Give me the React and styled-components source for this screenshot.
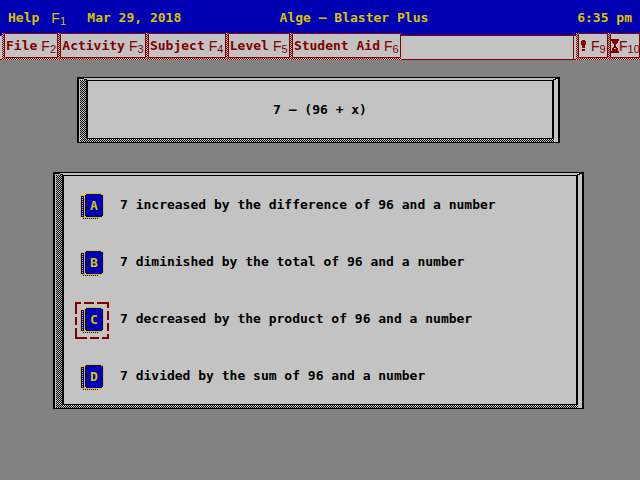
import React, { useState } from 'react';
import styled, { createGlobalStyle } from 'styled-components';

const colors = {
    blue: '#0000b2',
    yellow: '#dbc300',
    maroon: '#820000',
    face: '#c3c3c3',
    desk: '#828282',
    black: '#000000',
};

const checker = (color) =>
    `repeating-conic-gradient(${color} 0 25%, ${colors.face} 0 50%) 0 0 / 2px 2px`;

const block = (color) => `linear-gradient(${color}, ${color})`;

const GlobalStyle = createGlobalStyle`
    * {
        box-sizing: border-box;
    }
    body {
        margin: 0;
        background: ${colors.desk};
        font-family: 'DejaVu Sans Mono', monospace;
        font-size: 13px;
        font-weight: bold;
        line-height: 16px;
    }
    button {
        font: inherit;
        color: inherit;
        border: 0;
        padding: 0;
        background: none;
    }
`;

const Screen = styled.div`
    min-height: 100vh;
    background: ${colors.desk};
    color: ${colors.black};
`;

const TitleBar = styled.header`
    display: grid;
    grid-template-columns: 4fr auto 3fr;
    align-items: center;
    height: 33px;
    padding: 2px 8px 0;
    background: ${colors.blue};
    color: ${colors.yellow};
`;

const TitleLeft = styled.div`
    display: flex;
    align-items: center;
    gap: 21px;
`;

const HelpButton = styled.button`
    display: flex;
    gap: 12px;
`;

const Title = styled.h1`
    margin: 0;
    font-size: 13px;
`;

const Clock = styled.time`
    text-align: right;
`;

const Key = styled.span`
    display: flex;
    flex: none;
    width: ${(props) => (props.$wide ? '20px' : '15px')};
    height: 16px;
    font-family: 'Liberation Sans Narrow', 'Liberation Sans', sans-serif;
    font-size: 14px;
    font-weight: normal;
`;

const KeyNumber = styled.sub`
    font-size: 11px;
    line-height: 16px;
    padding-top: 3px;
`;

const MenuBar = styled.nav`
    display: flex;
    justify-content: space-between;
    height: 27px;
    background:
        ${block(colors.blue)} 0 0 / 100% 2px no-repeat,
        ${block(colors.maroon)} 0 2px / 100% 1px no-repeat,
        ${block(colors.maroon)} 0 100% / 100% 1px no-repeat,
        ${colors.face};
`;

const MenuGroup = styled.div`
    display: flex;
    padding-left: 2px;
    border-left: ${(props) => (props.$divided ? `1px solid ${colors.maroon}` : '0')};
`;

const MenuButton = styled.button`
    display: flex;
    padding: 0 0 2px 2px;
    color: ${colors.maroon};
    background: ${checker(colors.maroon)};
`;

const MenuFace = styled.span`
    display: flex;
    align-items: center;
    justify-content: center;
    gap: ${(props) => (props.$tight ? '0' : '4px')};
    min-width: 30px;
    height: 25px;
    padding: 0 ${(props) => (props.$tight ? '0' : '1px')};
    background: ${colors.face};
    border: 1px solid ${colors.maroon};
    border-radius: 1px;
`;

const Main = styled.main`
    display: flex;
    flex-direction: column;
    gap: 29px;
    padding: 17px 56px 24px 53px;
`;

const Panel = styled.section`
    margin: 0 ${(props) => (props.$inset ? '24px' : '0')};
    padding: 2px 4px 3px 7px;
    border: solid ${colors.black};
    border-width: 1px 2px;
    background:
        ${block(colors.black)} 0 0 / 5px 1px no-repeat,
        ${block(colors.black)} 5px 1px / 3px 1px no-repeat,
        ${block(colors.black)} 100% 0 / 3px 1px no-repeat,
        ${block(colors.black)} right 2px top 1px / 3px 1px no-repeat,
        ${block(colors.face)} 0 0 / 100% 2px no-repeat,
        ${block(colors.face)} 100% 0 / 4px 100% no-repeat,
        ${block(colors.face)} 0 0 / 1px 100% no-repeat,
        ${checker(colors.black)};
    background-origin: padding-box;
`;

const PanelFace = styled.div`
    border: solid ${colors.black};
    border-width: 1px 2px;
    background: ${colors.face};
`;

const Problem = styled.p`
    margin: 0;
    padding: 21px 0 20px;
    text-align: center;
`;

const Answers = styled.fieldset`
    display: grid;
    gap: 21px;
    margin: 0;
    padding: 12px 11px 9px;
    border: 0;
`;

const Answer = styled.label`
    display: flex;
    align-items: center;
    gap: 11px;
    height: 36px;
`;

const Radio = styled.input`
    appearance: none;
    width: 0;
    height: 0;
    margin: 0 -11px 0 0;
`;

const BadgeSvg = styled.svg`
    display: block;
    flex: none;
    shape-rendering: crispEdges;
`;

const AnswerText = styled.span`
    padding-bottom: 2px;
`;

const FKey = ({ n }) => (
    <Key $wide={n > 9}>
        F<KeyNumber>{n}</KeyNumber>
    </Key>
);

const Badge = ({ letter, selected }) => (
    <BadgeSvg width="34" height="37" viewBox="0 0 34 37" aria-hidden="true">
        {selected && (
            <path
                d="M0 1H6 M9 1H19 M22 1H34 M33 0V6 M33 9V18 M33 21V29 M33 32V37 M0 36H12 M15 36H24 M27 36H34 M1 0V12 M1 15V23 M1 26V37"
                stroke={colors.maroon}
                strokeWidth="2"
            />
        )}
        <path d="M6 7h4v23H7v-1H5V8h1z" fill={colors.yellow} />
        <path d="M6 8h3v21H6z" fill={colors.blue} />
        <path d="M7.500 9V29" stroke={colors.yellow} strokeDasharray="1 1" />
        <path d="M7 30.500H24" stroke={colors.yellow} />
        <path d="M8 30.500H24" stroke={colors.blue} strokeDasharray="1 1" />
        <path d="M11 5h15v1h2v1h1v21h-1v1h-1v1H11v-1h-1v-1H9V7h1V6h1z" fill={colors.yellow} />
        <path d="M11 6h15v1h2v21h-1v1H11v-1h-1V7h1z" fill={colors.blue} />
        <text
            x="19"
            y="22"
            textAnchor="middle"
            fill={colors.yellow}
            fontFamily="'DejaVu Sans Mono', monospace"
            fontSize="13"
        >
            {letter}
        </text>
    </BadgeSvg>
);

const Bang = () => (
    <svg width="7" height="14" viewBox="0 0 7 14" shapeRendering="crispEdges" aria-hidden="true">
        <path d="M2 1h3v1h1v4H5v3H2V6H1V2h1z M2 10h3v2H2z" fill={colors.maroon} />
    </svg>
);

const Hourglass = () => (
    <svg width="8" height="14" viewBox="0 0 8 14" shapeRendering="crispEdges" aria-hidden="true">
        <path
            d="M0 0h8v2H7v2H6v1H5v3h1v1h1v3h1v2H0v-2h1V9h1V8h1V5H2V4H1V2H0z"
            fill={colors.maroon}
        />
        <path d="M3 9h2v1H3z" fill={colors.face} />
    </svg>
);

const menus = [
    { label: 'File', n: 2 },
    { label: 'Activity', n: 3 },
    { label: 'Subject', n: 4 },
    { label: 'Level', n: 5 },
    { label: 'Student Aid', n: 6 },
];

const answers = [
    { letter: 'A', text: '7 increased by the difference of 96 and a number' },
    { letter: 'B', text: '7 diminished by the total of 96 and a number' },
    { letter: 'C', text: '7 decreased by the product of 96 and a number' },
    { letter: 'D', text: '7 divided by the sum of 96 and a number' },
];

const App = () => {
    const [picked, setPicked] = useState('C');

    return (
        <Screen>
            <GlobalStyle />
            <TitleBar>
                <TitleLeft>
                    <HelpButton type="button">
                        Help <FKey n={1} />
                    </HelpButton>
                    <time dateTime="2018-03-29">Mar 29, 2018</time>
                </TitleLeft>
                <Title>Alge – Blaster Plus</Title>
                <Clock dateTime="18:35">6:35 pm</Clock>
            </TitleBar>
            <MenuBar>
                <MenuGroup>
                    {menus.map((menu) => (
                        <MenuButton type="button" key={menu.label}>
                            <MenuFace>
                                {menu.label}
                                <FKey n={menu.n} />
                            </MenuFace>
                        </MenuButton>
                    ))}
                </MenuGroup>
                <MenuGroup $divided>
                    <MenuButton type="button" aria-label="Check answer">
                        <MenuFace>
                            <Bang />
                            <FKey n={9} />
                        </MenuFace>
                    </MenuButton>
                    <MenuButton type="button" aria-label="Timer">
                        <MenuFace $tight>
                            <Hourglass />
                            <FKey n={10} />
                        </MenuFace>
                    </MenuButton>
                </MenuGroup>
            </MenuBar>
            <Main>
                <Panel $inset>
                    <PanelFace>
                        <Problem>7 – (96 + x)</Problem>
                    </PanelFace>
                </Panel>
                <Panel>
                    <PanelFace>
                        <Answers aria-label="Answers">
                            {answers.map(({ letter, text }) => (
                                <Answer key={letter}>
                                    <Radio
                                        type="radio"
                                        name="answer"
                                        value={letter}
                                        checked={picked === letter}
                                        onChange={() => setPicked(letter)}
                                    />
                                    <Badge letter={letter} selected={picked === letter} />
                                    <AnswerText>{text}</AnswerText>
                                </Answer>
                            ))}
                        </Answers>
                    </PanelFace>
                </Panel>
            </Main>
        </Screen>
    );
};

export default App;
